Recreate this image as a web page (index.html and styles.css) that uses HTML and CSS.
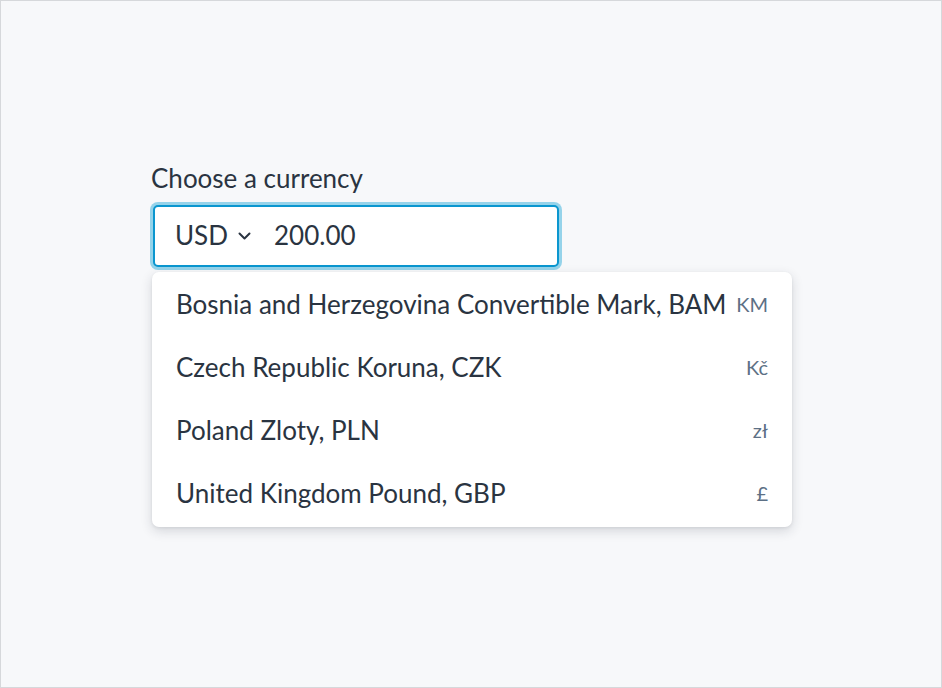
FILE: index.html
```html
<!DOCTYPE html>
<html lang="en">
<head>
<meta charset="utf-8">
<title>Choose a currency</title>
<link rel="stylesheet" href="styles.css">
</head>
<body>
<div class="frame">
  <div class="field">
    <label class="label" for="amount">Choose a currency</label>
    <div class="input">
      <button class="currency" type="button">
        <span class="code">USD</span>
        <svg class="chev" width="13" height="8" viewBox="0 0 13 8" aria-hidden="true"><path d="M1.5 1.5 L6.5 6.5 L11.5 1.5" fill="none" stroke="#2a3441" stroke-width="2" stroke-linecap="round" stroke-linejoin="round"/></svg>
      </button>
      <span class="amount" id="amount">200.00</span>
    </div>
    <ul class="menu">
      <li class="item"><span class="name">Bosnia and Herzegovina Convertible Mark, BAM</span><span class="sym">KM</span></li>
      <li class="item"><span class="name">Czech Republic Koruna, CZK</span><span class="sym">Kč</span></li>
      <li class="item"><span class="name">Poland Zloty, PLN</span><span class="sym">zł</span></li>
      <li class="item"><span class="name">United Kingdom Pound, GBP</span><span class="sym">£</span></li>
    </ul>
  </div>
</div>
</body>
</html>
```

FILE: styles.css
```css
* { box-sizing: border-box; }
html, body { margin: 0; padding: 0; }
body {
  font-family: "Lato", "Noto Sans", sans-serif;
  color: #2a3441;
}
.frame {
  width: 942px;
  height: 688px;
  border: 1px solid #d6d8db;
  background: #f7f8fa;
  padding: 161px 0 0 150px;
}
.field {
  display: flex;
  flex-direction: column;
  align-items: flex-start;
}
.label {
  font-size: 26px;
  line-height: 32px;
  margin-bottom: 11px;
}
.input {
  margin-left: 2px;
  width: 406px;
  height: 62px;
  border: 2px solid #0a96cf;
  border-radius: 5px;
  background: #fff;
  box-shadow: 0 0 0 3px #95d3ea;
  display: flex;
  align-items: center;
  padding: 0 0 3px 20px;
}
.currency {
  display: flex;
  align-items: center;
  gap: 10px;
  border: 0;
  background: none;
  padding: 0;
  font: inherit;
  color: inherit;
  font-size: 26px;
  line-height: 32px;
}
.chev { display: block; margin-top: 2px; }
.amount {
  margin-left: 23px;
  font-size: 26px;
  line-height: 32px;
}
.menu {
  list-style: none;
  margin: 5px 0 0 1px;
  padding: 0 0 3px;
  width: 640px;
  background: #fff;
  border-radius: 7px;
  box-shadow: 0 4px 12px rgba(30, 40, 55, 0.16), 0 1px 3px rgba(30, 40, 55, 0.08);
}
.item {
  height: 63px;
  display: flex;
  align-items: center;
  justify-content: space-between;
  padding: 0 24px 0 24px;
  font-size: 26px;
}
.sym {
  font-size: 20px;
  color: #5d7085;
}
```
